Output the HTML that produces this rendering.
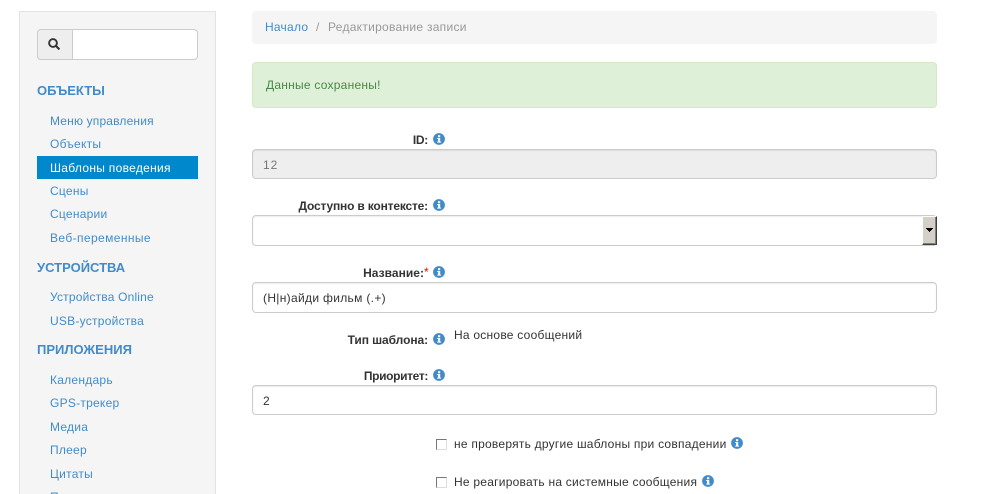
<!DOCTYPE html>
<html lang="ru"><head><meta charset="utf-8"><title>Редактирование записи</title>
<style>
html,body{margin:0;padding:0;background:#fff;width:982px;height:494px;overflow:hidden}
body{position:relative;font-family:"Liberation Sans",Arial,sans-serif;font-size:12px;color:#333}
.a{position:absolute;white-space:nowrap;line-height:16px}
.box{position:absolute;box-sizing:border-box}
.n{left:50px;color:#428bca;letter-spacing:.25px}
.h{left:37px;color:#428bca;font-weight:bold;font-size:13px}
.l{font-weight:bold;text-align:right;right:554px;font-size:12px;letter-spacing:-.08px}
.f{left:252px;width:685px;height:30px;border:1px solid #ccc;border-radius:4px;background:#fff;box-shadow:inset 0 1px 1px rgba(0,0,0,.075)}
.t{letter-spacing:.24px}
.i{position:absolute;width:12px;height:12px}
.c{position:absolute;box-sizing:border-box;width:11px;height:11px;background:#fff;border:1px solid;border-color:#777 #ddd #ddd #777}
</style></head><body>
<svg width="0" height="0" style="position:absolute"><defs><symbol id="info" viewBox="0 0 12 12"><circle cx="6" cy="6" r="5.9" fill="#428bca"/><rect x="5" y="2.2" width="2.2" height="2" fill="#fff"/><path d="M4.2 5h3v3.6h.9v1H4.2v-1h.9V6h-.9z" fill="#fff"/></symbol></defs></svg>

<div class="box" style="left:19px;top:11px;width:197px;height:490px;background:#f5f5f5;border:1px solid #e3e3e3"></div>
<div class="box" style="left:37px;top:29px;width:161px;height:31px;background:#fff;border:1px solid #ccc;border-radius:4px"></div>
<div class="box" style="left:37px;top:29px;width:36px;height:31px;background:#eee;border:1px solid #ccc;border-radius:4px 0 0 4px"></div>
<svg class="i" style="left:48px;top:38px" viewBox="0 0 12 12"><circle cx="5" cy="5" r="3.9" fill="none" stroke="#333" stroke-width="1.9"/><path d="M7.8 7.8L11.4 11.4" stroke="#333" stroke-width="2.1"/></svg>

<div class="a h" style="top:83px">ОБЪЕКТЫ</div>
<div class="a n" style="top:113px;letter-spacing:.17px">Меню управления</div>
<div class="a n" style="top:136px">Объекты</div>
<div class="box" style="left:37px;top:156px;width:161px;height:23px;background:#0088cc"></div>
<div class="a n" style="top:160px;color:#fff;letter-spacing:.3px">Шаблоны поведения</div>
<div class="a n" style="top:183px">Сцены</div>
<div class="a n" style="top:206px">Сценарии</div>
<div class="a n" style="top:230px;letter-spacing:.4px">Веб-переменные</div>
<div class="a h" style="top:260px">УСТРОЙСТВА</div>
<div class="a n" style="top:289px;letter-spacing:.18px">Устройства Online</div>
<div class="a n" style="top:313px">USB-устройства</div>
<div class="a h" style="top:342px">ПРИЛОЖЕНИЯ</div>
<div class="a n" style="top:372px">Календарь</div>
<div class="a n" style="top:395px">GPS-трекер</div>
<div class="a n" style="top:419px">Медиа</div>
<div class="a n" style="top:442px">Плеер</div>
<div class="a n" style="top:466px">Цитаты</div>
<div class="a n" style="top:489px">Панели</div>

<div class="box" style="left:252px;top:11px;width:685px;height:33px;background:#f5f5f5;border-radius:4px"></div>
<div class="a t" style="left:265px;top:19px;color:#428bca">Начало</div>
<div class="a" style="left:316px;top:19px;color:#999">/</div>
<div class="a t" style="left:328px;top:19px;color:#999;letter-spacing:.28px">Редактирование записи</div>

<div class="box" style="left:252px;top:62px;width:685px;height:46px;background:#dff0d8;border:1px solid #d6e9c6;border-radius:4px"></div>
<div class="a t" style="left:266px;top:77px;color:#468847">Данные сохранены!</div>

<div class="a l" style="top:132px;letter-spacing:-.3px">ID:</div>
<svg class="i" style="left:433px;top:133px"><use href="#info"/></svg>
<div class="box f" style="top:149px;background:#eee"></div>
<div class="a t" style="left:263px;top:157px;color:#777;letter-spacing:1px">12</div>

<div class="a l" style="top:198px;letter-spacing:-.18px">Доступно в контексте:</div>
<svg class="i" style="left:433px;top:199px"><use href="#info"/></svg>
<div class="box f" style="top:215px;height:31px"></div>
<div class="box" style="left:922px;top:216px;width:15px;height:29px;background:#d4d0c8;border:1px solid;border-color:#fff #404040 #404040 #fff;box-shadow:inset -1px -1px 0 #808080"></div>
<svg style="position:absolute;left:925px;top:228px" width="9" height="6"><path d="M1 0h7v1H7v1H6v1H5v1H4V3H3V2H2V1H1z" fill="#000"/></svg>

<div class="a l" style="top:265px;right:558px;letter-spacing:.03px">Название:</div>
<div class="a" style="left:424px;top:264px;color:#f00;font-size:12px">*</div>
<svg class="i" style="left:433px;top:266px"><use href="#info"/></svg>
<div class="box f" style="top:282px;height:31px"></div>
<div class="a t" style="left:263px;top:290px;letter-spacing:.32px">(Н|н)айди фильм (.+)</div>

<div class="a l" style="top:332px">Тип шаблона:</div>
<svg class="i" style="left:433px;top:333px"><use href="#info"/></svg>
<div class="a t" style="left:454px;top:327px">На основе сообщений</div>

<div class="a l" style="top:368px;letter-spacing:-.35px">Приоритет:</div>
<svg class="i" style="left:433px;top:369px"><use href="#info"/></svg>
<div class="box f" style="top:385px"></div>
<div class="a t" style="left:263px;top:393px">2</div>

<div class="c" style="left:436px;top:439px"></div>
<div class="a t" style="left:454px;top:436px">не проверять другие шаблоны при совпадении</div>
<svg class="i" style="left:731px;top:437px"><use href="#info"/></svg>
<div class="c" style="left:436px;top:477px"></div>
<div class="a t" style="left:454px;top:474px">Не реагировать на системные сообщения</div>
<svg class="i" style="left:702px;top:475px"><use href="#info"/></svg>
</body></html>
